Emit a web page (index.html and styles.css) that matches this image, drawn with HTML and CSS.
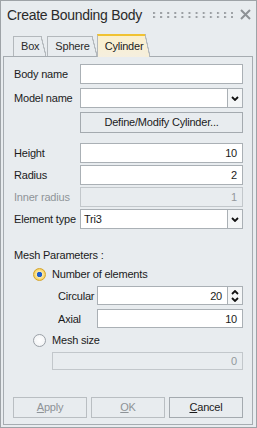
FILE: index.html
```html
<!DOCTYPE html>
<html>
<head>
<meta charset="utf-8">
<link rel="stylesheet" href="styles.css">
</head>
<body>
<div class="window">
  <div class="titlebar">
    <span class="title">Create Bounding Body</span>
    <svg class="grip" width="80" height="6" viewBox="0 0 80 6">
      <defs>
        <pattern id="dots" width="7.1" height="4" patternUnits="userSpaceOnUse">
          <rect width="2" height="2" fill="#9b9fa3"/>
        </pattern>
      </defs>
      <rect width="80" height="6" fill="url(#dots)"/>
    </svg>
    <svg class="close" width="11" height="11" viewBox="0 0 11 11">
      <path d="M1 1 L10 10 M10 1 L1 10" stroke="#8d9195" stroke-width="2" fill="none"/>
    </svg>
  </div>
  <div class="tabs">
    <div class="tab">Box</div>
    <div class="tab">Sphere</div>
    <div class="tab active">Cylinder</div>
  </div>
  <div class="panel">
    <div class="row first">
      <span class="label">Body name</span>
      <div class="field"></div>
    </div>
    <div class="row gap4">
      <span class="label">Model name</span>
      <div class="combo">
        <div class="field"></div>
        <div class="dropbtn"><svg width="8" height="5" viewBox="0 0 8 5"><path d="M1 1 L4 4 L7 1" stroke="#111" stroke-width="1.8" fill="none"/></svg></div>
      </div>
    </div>
    <div class="btn define">Define/Modify Cylinder...</div>
    <div class="row gap10">
      <span class="label">Height</span>
      <div class="field num">10</div>
    </div>
    <div class="row gap2">
      <span class="label">Radius</span>
      <div class="field num">2</div>
    </div>
    <div class="row gap2">
      <span class="label disabled">Inner radius</span>
      <div class="field num off">1</div>
    </div>
    <div class="row gap2">
      <span class="label">Element type</span>
      <div class="combo">
        <div class="field text">Tri3</div>
        <div class="dropbtn"><svg width="8" height="5" viewBox="0 0 8 5"><path d="M1 1 L4 4 L7 1" stroke="#111" stroke-width="1.8" fill="none"/></svg></div>
      </div>
    </div>
    <div class="section">Mesh Parameters :</div>
    <div class="radiorow">
      <span class="radio on"></span>
      <span>Number of elements</span>
    </div>
    <div class="subrow">
      <span class="sublabel">Circular</span>
      <div class="combo">
        <div class="field num">20</div>
        <div class="spin">
          <svg width="8" height="5" viewBox="0 0 8 5"><path d="M1 4 L4 1 L7 4" stroke="#111" stroke-width="1.8" fill="none"/></svg>
          <svg width="8" height="5" viewBox="0 0 8 5"><path d="M1 1 L4 4 L7 1" stroke="#111" stroke-width="1.8" fill="none"/></svg>
        </div>
      </div>
    </div>
    <div class="subrow">
      <span class="sublabel">Axial</span>
      <div class="field num">10</div>
    </div>
    <div class="radiorow">
      <span class="radio"></span>
      <span>Mesh size</span>
    </div>
    <div class="field num off meshsize">0</div>
    <div class="buttons">
      <div class="btn off"><u>A</u>pply</div>
      <div class="btn off"><u>O</u>K</div>
      <div class="btn"><u>C</u>ancel</div>
    </div>
  </div>
</div>
</body>
</html>
```

FILE: styles.css
```css
* { box-sizing: border-box; }
html, body { margin: 0; padding: 0; }
body {
  width: 257px;
  height: 428px;
  overflow: hidden;
  background: #e8ecef;
  font-family: "Liberation Sans", Arial, sans-serif;
  font-size: 11px;
  letter-spacing: -0.2px;
  color: #1b1b1b;
}
.window {
  width: 257px;
  height: 428px;
  border: 1px solid #9ea3a7;
  background: #e8ecef;
  display: flex;
  flex-direction: column;
}
.titlebar {
  flex: none;
  height: 33px;
  display: flex;
  align-items: flex-start;
  padding: 6px 5px 0 6px;
}
.title {
  font-size: 14px;
  letter-spacing: -0.3px;
  line-height: 16px;
  color: #2a2a2a;
}
.grip { margin: 5px 0 0 auto; }
.close { margin: 2px 0 0 7px; }

.tabs {
  flex: none;
  height: 22px;
  display: flex;
  align-items: flex-end;
  padding-left: 12px;
}
.tab {
  position: relative;
  height: 20px;
  line-height: 19px;
  padding: 0 2px 0 7px;
  margin-right: 6px;
  border-left: 1px solid #b3b8bc;
  border-top: 1px solid #b3b8bc;
  background: #e8ecef;
  color: #2a2a2a;
}
.tab::after {
  content: "";
  position: absolute;
  top: -1px;
  bottom: 0;
  right: -5px;
  width: 5px;
  background: linear-gradient(to top right, #e8ecef calc(50% - 0.8px), #b3b8bc calc(50% - 0.4px), #b3b8bc calc(50% + 0.4px), transparent calc(50% + 0.8px));
}
.tab.active {
  z-index: 1;
  height: 23px;
  line-height: 21px;
  margin-bottom: -1px;
  margin-left: -1px;
  border-top: 2px solid #f0c232;
  background: linear-gradient(#faefcc, #f5efdf);
  color: #1b1b1b;
}
.tab.active::after {
  top: -2px;
  background: linear-gradient(to top right, #f7efd8 calc(50% - 0.8px), #b3b8bc calc(50% - 0.4px), #b3b8bc calc(50% + 0.4px), transparent calc(50% + 0.8px));
}

.panel {
  flex: 1;
  margin: 0 3px 2px 2px;
  border: 1px solid #a6acb1;
  padding: 0 9px 6px 10px;
  display: flex;
  flex-direction: column;
}
.row {
  display: flex;
  align-items: center;
  height: 20px;
}
.first { margin-top: 7px; }
.gap4 { margin-top: 4px; }
.gap10 { margin-top: 10px; }
.gap2 { margin-top: 2px; }
.label {
  width: 66px;
  flex: none;
  white-space: nowrap;
}
.label.disabled { color: #8f9498; }
.field {
  flex: 1;
  height: 100%;
  background: #fff;
  border: 1px solid #aab0b5;
  line-height: 18px;
  padding: 0 4px;
  white-space: nowrap;
}
.field.num { text-align: right; padding-right: 5px; }
.field.text { padding-left: 3px; }
.field.off {
  background: #e8ecef;
  border-color: #c2c7cb;
  color: #93989c;
}
.combo {
  flex: 1;
  height: 100%;
  display: flex;
}
.dropbtn, .spin {
  flex: none;
  width: 15px;
  height: 100%;
  border: 1px solid #aab0b5;
  border-left: none;
  background: #f4f6f7;
  display: flex;
  align-items: center;
  justify-content: center;
}
.spin {
  flex-direction: column;
  gap: 2px;
}
.btn {
  height: 21px;
  border: 1px solid #a4aaaf;
  background: #e8ecef;
  text-align: center;
  line-height: 19px;
  white-space: nowrap;
}
.btn u { text-decoration: underline; text-underline-offset: 1px; }
.define {
  margin: 4px 0 0 66px;
}
.section {
  margin-top: 19px;
  line-height: 14px;
  height: 14px;
}
.radiorow {
  margin-top: 4px;
  height: 16px;
  display: flex;
  align-items: center;
  padding-left: 19px;
  gap: 6px;
}
.radio {
  width: 13px;
  height: 13px;
  border-radius: 50%;
  border: 1px solid #9ba1a7;
  background: radial-gradient(circle, #ffffff 0, #eef0f2 100%);
  flex: none;
}
.radio.on {
  border-color: #d6a42a;
  background: radial-gradient(circle, #1f5fd0 0 2.4px, #fae9a8 3px, #f3cf5e 5.5px);
}
.subrow {
  margin-top: 4px;
  height: 19px;
  display: flex;
  align-items: center;
  padding-left: 44px;
}
.sublabel {
  width: 39px;
  flex: none;
}
.meshsize {
  flex: none;
  height: 18px;
  line-height: 16px;
  margin: 4px 0 0 38px;
}
.buttons {
  margin-top: auto;
  margin-left: -1px;
  display: flex;
  gap: 4px;
}
.buttons .btn { flex: 1; }
.btn.off {
  border-color: #b9bec2;
  color: #8e9397;
}
```
